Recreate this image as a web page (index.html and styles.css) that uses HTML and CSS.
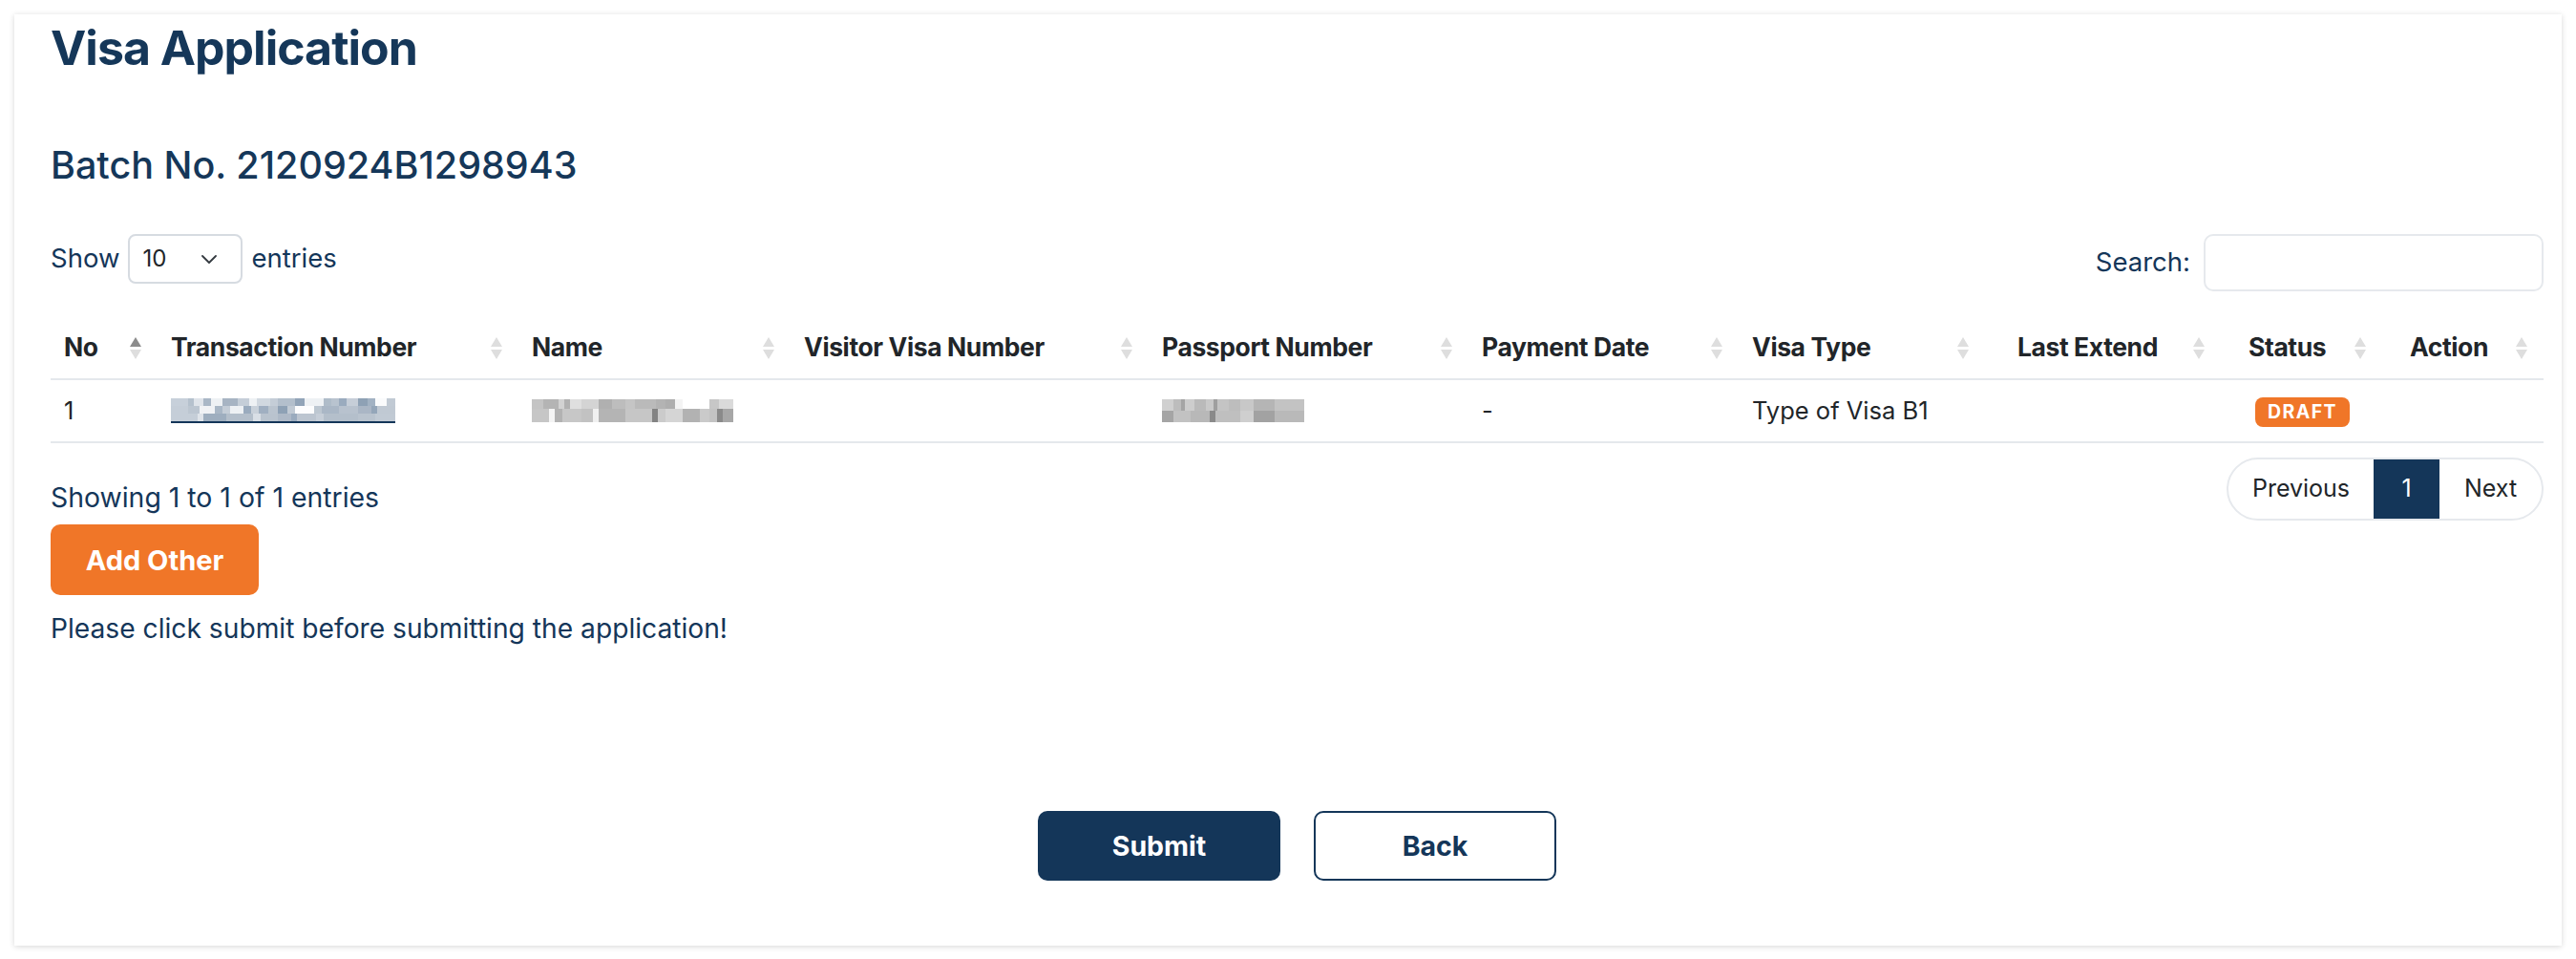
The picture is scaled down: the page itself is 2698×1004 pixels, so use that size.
FILE: index.html
```html
<!DOCTYPE html>
<html lang="en">
<head>
<meta charset="utf-8">
<title>Visa Application</title>
<link rel="stylesheet" href="styles.css">
</head>
<body>
<div class="card">
  <h1 class="title">Visa Application</h1>
  <h2 class="batch">Batch No. 2120924B1298943</h2>

  <div class="controls">
    <div class="length">
      <span>Show</span>
      <div class="select">
        <span class="select-val">10</span>
        <svg class="chev" width="16" height="9" viewBox="0 0 16 9"><path d="M1 1 L8 8 L15 1" fill="none" stroke="#343a40" stroke-width="1.8" stroke-linecap="round" stroke-linejoin="round"/></svg>
      </div>
      <span>entries</span>
    </div>
    <div class="search">
      <span>Search:</span>
      <div class="search-input"></div>
    </div>
  </div>

  <table class="grid">
    <colgroup>
      <col class="w-no"><col class="w-trans"><col class="w-name"><col class="w-visitor"><col class="w-pass"><col class="w-pay"><col class="w-type"><col class="w-ext"><col class="w-status"><col class="w-action">
    </colgroup>
    <thead>
      <tr>
        <th class="sort asc">No</th>
        <th class="sort">Transaction Number</th>
        <th class="sort">Name</th>
        <th class="sort">Visitor Visa Number</th>
        <th class="sort">Passport Number</th>
        <th class="sort">Payment Date</th>
        <th class="sort">Visa Type</th>
        <th class="sort right far">Last Extend</th>
        <th class="sort far">Status</th>
        <th class="sort">Action</th>
      </tr>
    </thead>
    <tbody>
      <tr>
        <td>1</td>
        <td><a class="mosaic mosaic-t" href="#" aria-label="transaction number"></a></td>
        <td><span class="mosaic mosaic-n"></span></td>
        <td></td>
        <td><span class="mosaic mosaic-p"></span></td>
        <td>-</td>
        <td>Type of Visa B1</td>
        <td></td>
        <td class="status-cell"><span class="badge">DRAFT</span></td>
        <td></td>
      </tr>
    </tbody>
  </table>

  <div class="footer-row">
    <div class="info">Showing 1 to 1 of 1 entries</div>
    <div class="pager">
      <span class="pg prev">Previous</span>
      <span class="pg cur">1</span>
      <span class="pg next">Next</span>
    </div>
  </div>

  <button class="btn-add">Add Other</button>
  <p class="note">Please click submit before submitting the application!</p>

  <div class="actions">
    <button class="btn-submit">Submit</button>
    <button class="btn-back">Back</button>
  </div>
</div>
</body>
</html>
```

FILE: styles.css
```css
* { box-sizing: border-box; }
html, body { margin: 0; padding: 0; background: #ffffff; }
body {
  font-family: Inter, "Noto Sans", "Liberation Sans", sans-serif;
  font-size: 27px;
  line-height: 1.5;
  color: #143659;
}
.card {
  margin: 15px 15px 14px 15px;
  padding: 3px 19px 68px 38px;
  background: #fff;
  box-shadow: 0 1px 6px rgba(0, 0, 0, 0.16);
}
.title {
  margin: 0;
  font-size: 50px;
  line-height: 65px;
  font-weight: 700;
  color: #153759;
  letter-spacing: -1px;
}
.batch {
  margin: 67px 0 0;
  font-size: 39.5px;
  line-height: 46px;
  font-weight: 500;
  color: #153759;
}
.controls {
  margin-top: 49px;
  display: flex;
  justify-content: space-between;
  align-items: flex-start;
}
.length {
  display: flex;
  align-items: center;
  gap: 9px;
  height: 52px;
  font-size: 27.5px;
}
.select {
  width: 120px;
  height: 52px;
  border: 2px solid #d6dbe1;
  border-radius: 8px;
  display: flex;
  align-items: center;
  justify-content: space-between;
  padding: 0 25px 0 13px;
  color: #212529;
  font-size: 24px;
}
.chev { display: block; }
.search {
  display: flex;
  align-items: center;
  gap: 14px;
  height: 60px;
  font-size: 27.5px;
}
.search-input {
  width: 356px;
  height: 60px;
  border: 2px solid #e6e9ed;
  border-radius: 10px;
}
.grid {
  margin-top: 26px;
  width: 100%;
  border-collapse: collapse;
  table-layout: fixed;
  color: #212529;
}
.w-no { width: 112px; }
.w-trans { width: 378px; }
.w-name { width: 285px; }
.w-visitor { width: 375px; }
.w-pass { width: 335px; }
.w-pay { width: 283px; }
.w-type { width: 258px; }
.w-ext { width: 262px; }
.w-status { width: 169px; }
.w-action { width: 154px; }
.grid th {
  position: relative;
  height: 66px;
  padding: 0 14px;
  text-align: left;
  font-weight: 700;
  font-size: 26.5px;
  border-bottom: 2px solid #e4e8ec;
  white-space: nowrap;
  letter-spacing: -0.4px;
}
.grid th.right { text-align: right; padding-right: 81px; }
.sort::before, .sort::after {
  content: "";
  position: absolute;
  right: 17px;
  width: 0;
  height: 0;
  border-left: 6px solid transparent;
  border-right: 6px solid transparent;
}
.sort::before {
  top: 22px;
  border-bottom: 10px solid #dedede;
}
.sort::after {
  top: 35px;
  border-top: 10px solid #dedede;
}
.sort.far::before, .sort.far::after { right: 32px; }
.sort.asc::before { border-bottom-color: #8c8c8c; }
.grid td {
  height: 66px;
  padding: 0 14px;
  border-bottom: 2px solid #e4e8ec;
  vertical-align: middle;
  font-size: 25.5px;
  white-space: nowrap;
}
.grid td.status-cell { padding-left: 21px; }
.mosaic {
  display: block;
  height: 24px;
}
.mosaic-t {
  width: 235px;
  height: 26px;
  border-bottom: 2px solid #143659;
  background:
    linear-gradient(90deg, #c7d0da 0 18px, #b5c1cd 18px 24px, #dfe4ea 24px 34px, #a9b7c6 34px 42px, #eef1f4 42px 54px, #a7b4c3 54px 70px, #c5ced8 70px 82px, #eef1f4 82px 90px, #d1d8e0 90px 104px, #c4cdd7 104px 112px, #b3bfcc 112px 130px, #92a4b8 130px 140px, #eef1f4 140px 160px, #afbcc9 160px 168px, #b8c3cf 168px 176px, #9aabbe 176px 184px, #c6ced8 184px 196px, #8ea1b5 196px 206px, #a2b2c3 206px 214px, #fafbfc 214px 226px, #c1cad4 226px 235px) 0 0 / 100% 8px no-repeat,
    linear-gradient(90deg, #c5ced8 0 18px, #bcc6d1 18px 30px, #f0f2f5 30px 46px, #a9b7c6 46px 54px, #c4cdd7 54px 62px, #eef1f4 62px 76px, #9aabbe 76px 84px, #c9d1da 84px 92px, #a0afc1 92px 102px, #bac4cf 102px 112px, #8ea1b5 112px 122px, #c1cad4 122px 130px, #fdfdfe 130px 150px, #bdc7d1 150px 158px, #aab7c6 158px 176px, #b8c2ce 176px 196px, #aab6c5 196px 210px, #94a6b9 210px 216px, #c0c9d3 216px 235px) 0 8px / 100% 8px no-repeat,
    linear-gradient(90deg, #c5ced8 0 28px, #dfe4ea 28px 34px, #9eaebf 34px 58px, #b4bfcb 58px 86px, #d9dfe6 86px 94px, #b9c3ce 94px 112px, #aeb9c7 112px 126px, #9aabbe 126px 132px, #bcc5d0 132px 152px, #c6ced8 152px 160px, #b4bfcb 160px 196px, #b9c3ce 196px 214px, #c1cad4 214px 235px) 0 16px / 100% 8px no-repeat;
}
.mosaic-n {
  width: 211px;
  background:
    linear-gradient(90deg, #c4c4c4 0 12px, #b4b4b4 12px 28px, #d2d2d2 28px 34px, #b1b1b1 34px 40px, #dfdfdf 40px 52px, #d4d4d4 52px 70px, #b0b0b0 70px 84px, #bdbdbd 84px 98px, #c5c5c5 98px 108px, #bababa 108px 130px, #b3b3b3 130px 140px, #aeaeae 140px 150px, #f3f3f3 150px 158px, #ffffff 158px 186px, #c7c7c7 186px 196px, #dadada 196px 211px) 0 0 / 100% 10px no-repeat,
    linear-gradient(90deg, #c6c6c6 0 18px, #f4f4f4 18px 24px, #b2b2b2 24px 32px, #c7c7c7 32px 52px, #c2c2c2 52px 64px, #f0f0f0 64px 70px, #b4b4b4 70px 98px, #c6c6c6 98px 126px, #838383 126px 132px, #cbcbcb 132px 140px, #d5d5d5 140px 158px, #b2b2b2 158px 176px, #cacaca 176px 186px, #c3c3c3 186px 194px, #8a8a8a 194px 200px, #a7a7a7 200px 211px) 0 10px / 100% 14px no-repeat;
}
.mosaic-p {
  width: 149px;
  background:
    linear-gradient(90deg, #d0d0d0 0 12px, #bdbdbd 12px 20px, #a5a5a5 20px 24px, #cdcdcd 24px 34px, #bababa 34px 46px, #c9c9c9 46px 54px, #9f9f9f 54px 58px, #c4c4c4 58px 70px, #bdbdbd 70px 82px, #c8c8c8 82px 96px, #b5b5b5 96px 118px, #c3c3c3 118px 149px) 0 0 / 100% 12px no-repeat,
    linear-gradient(90deg, #a5a5a5 0 12px, #c2c2c2 12px 30px, #b8b8b8 30px 50px, #8a8a8a 50px 56px, #bfbfbf 56px 82px, #cfcfcf 82px 96px, #a2a2a2 96px 118px, #b9b9b9 118px 149px) 0 12px / 100% 12px no-repeat;
}
.badge {
  display: inline-block;
  height: 31px;
  line-height: 31px;
  padding: 0 13px;
  border-radius: 8px;
  background: #f07628;
  color: #fff;
  font-weight: 700;
  font-size: 19.5px;
  letter-spacing: 1.4px;
  vertical-align: middle;
}
.footer-row {
  margin-top: 15px;
  display: flex;
  justify-content: space-between;
  align-items: flex-start;
}
.info {
  padding-top: 22px;
  line-height: 40px;
  font-size: 28.4px;
}
.pager {
  display: flex;
  height: 66px;
  border: 2px solid #e6e9ed;
  border-radius: 33px;
  overflow: hidden;
  color: #212529;
  font-size: 25px;
}
.pg {
  display: flex;
  align-items: center;
  justify-content: center;
  height: 100%;
}
.prev { width: 152px; }
.cur { width: 69px; background: #143659; color: #fff; }
.next { width: 107px; }
button {
  font-family: inherit;
  cursor: pointer;
}
.btn-add {
  display: block;
  margin-top: 4px;
  width: 218px;
  height: 74px;
  border: 0;
  border-radius: 10px;
  background: #f07628;
  color: #fff;
  font-size: 29px;
  font-weight: 700;
}
.note {
  margin: 15px 0 0;
  line-height: 40px;
  font-size: 28.2px;
}
.actions {
  margin-top: 171px;
  display: flex;
  justify-content: center;
  gap: 35px;
}
.btn-submit, .btn-back {
  width: 254px;
  height: 73px;
  border-radius: 10px;
  font-size: 28.5px;
  font-weight: 700;
}
.btn-submit {
  border: 0;
  background: #143659;
  color: #fff;
}
.btn-back {
  border: 2px solid #143659;
  background: #fff;
  color: #143659;
}
```
